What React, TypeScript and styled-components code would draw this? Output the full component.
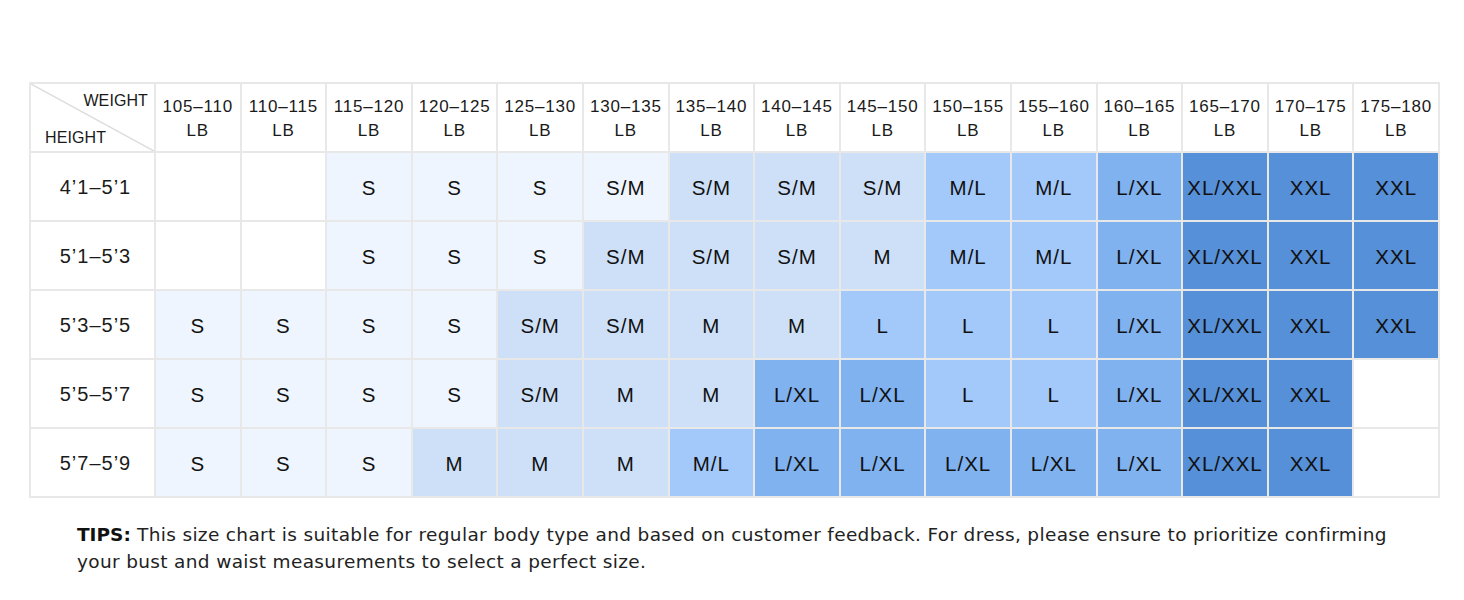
import React from "react";
import styled, { createGlobalStyle } from "styled-components";

type Tone = 0 | 1 | 2 | 3 | 4 | 5;

const tones: Record<Tone, string> = {
  0: "#ffffff",
  1: "#eef5fe",
  2: "#cde0f8",
  3: "#a3c9fa",
  4: "#80b2f0",
  5: "#5690d8",
};

const weights = [
  "105–110",
  "110–115",
  "115–120",
  "120–125",
  "125–130",
  "130–135",
  "135–140",
  "140–145",
  "145–150",
  "150–155",
  "155–160",
  "160–165",
  "165–170",
  "170–175",
  "175–180",
];

// each cell: [size, tone]
const rows: { height: string; cells: [string, Tone][] }[] = [
  {
    height: "4’1–5’1",
    cells: [
      ["", 0], ["", 0], ["S", 1], ["S", 1], ["S", 1], ["S/M", 1], ["S/M", 2], ["S/M", 2],
      ["S/M", 2], ["M/L", 3], ["M/L", 3], ["L/XL", 4], ["XL/XXL", 5], ["XXL", 5], ["XXL", 5],
    ],
  },
  {
    height: "5’1–5’3",
    cells: [
      ["", 0], ["", 0], ["S", 1], ["S", 1], ["S", 1], ["S/M", 2], ["S/M", 2], ["S/M", 2],
      ["M", 2], ["M/L", 3], ["M/L", 3], ["L/XL", 4], ["XL/XXL", 5], ["XXL", 5], ["XXL", 5],
    ],
  },
  {
    height: "5’3–5’5",
    cells: [
      ["S", 1], ["S", 1], ["S", 1], ["S", 1], ["S/M", 2], ["S/M", 2], ["M", 2], ["M", 2],
      ["L", 3], ["L", 3], ["L", 3], ["L/XL", 4], ["XL/XXL", 5], ["XXL", 5], ["XXL", 5],
    ],
  },
  {
    height: "5’5–5’7",
    cells: [
      ["S", 1], ["S", 1], ["S", 1], ["S", 1], ["S/M", 2], ["M", 2], ["M", 2], ["L/XL", 4],
      ["L/XL", 4], ["L", 3], ["L", 3], ["L/XL", 4], ["XL/XXL", 5], ["XXL", 5], ["", 0],
    ],
  },
  {
    height: "5’7–5’9",
    cells: [
      ["S", 1], ["S", 1], ["S", 1], ["M", 2], ["M", 2], ["M", 2], ["M/L", 3], ["L/XL", 4],
      ["L/XL", 4], ["L/XL", 4], ["L/XL", 4], ["L/XL", 4], ["XL/XXL", 5], ["XXL", 5], ["", 0],
    ],
  },
];

const GlobalStyle = createGlobalStyle`
  body {
    margin: 0;
    background: #fff;
    font-family: "Liberation Sans", Arial, sans-serif;
    color: #1a1a1a;
  }
`;

const Page = styled.div`
  width: 1464px;
  height: 600px;
  box-sizing: border-box;
  padding: 82px 24px 0 29px;
`;

const Grid = styled.div`
  display: grid;
  width: 1411px;
  grid-template-columns: 123px repeat(15, 1fr);
  grid-template-rows: 67px repeat(5, 67px);
  gap: 2px;
  padding: 2px;
  box-sizing: border-box;
  background: #e8e8e8;
`;

const Corner = styled.div`
  position: relative;
  background: #fff;
  overflow: hidden;
`;

const Diagonal = styled.svg`
  position: absolute;
  inset: 0;
  width: 100%;
  height: 100%;
`;

const CornerLabel = styled.span<{ $pos: "top" | "bottom" }>`
  position: absolute;
  font-size: 16px;
  letter-spacing: 0.1px;
  ${({ $pos }) =>
    $pos === "top" ? "top: 8px; right: 6px;" : "bottom: 4px; left: 14px;"}
`;

const HeadCell = styled.div`
  background: #fff;
  display: flex;
  flex-direction: column;
  align-items: center;
  justify-content: center;
  font-size: 17px;
  line-height: 24px;
  letter-spacing: 0.8px;
  padding-top: 3px;
`;

const RowLabel = styled.div`
  background: #fff;
  display: flex;
  align-items: center;
  justify-content: center;
  font-size: 20px;
  letter-spacing: 1px;
  padding-top: 2px;
  padding-left: 6px;
`;

const SizeCell = styled.div<{ $tone: Tone }>`
  background: ${({ $tone }) => tones[$tone]};
  display: flex;
  align-items: center;
  justify-content: center;
  font-size: 20.5px;
  letter-spacing: 1px;
  padding-top: 3px;
  color: #111;
  white-space: nowrap;
`;

const Tips = styled.p`
  margin: 23px 0 0 48px;
  width: 1330px;
  font-family: "DejaVu Sans", "Liberation Sans", sans-serif;
  font-size: 18.5px;
  line-height: 27px;
  color: #222;
  letter-spacing: 0.34px;

  b {
    font-weight: 700;
    color: #111;
    letter-spacing: 0;
  }
`;

const App: React.FC = () => {
  return (
    <>
      <GlobalStyle />
      <Page>
        <Grid>
          <Corner>
            <Diagonal viewBox="0 0 123 67" preserveAspectRatio="none">
              <line x1="0" y1="0" x2="123" y2="67" stroke="#dcdcdc" strokeWidth="1.5" />
            </Diagonal>
            <CornerLabel $pos="top">WEIGHT</CornerLabel>
            <CornerLabel $pos="bottom">HEIGHT</CornerLabel>
          </Corner>
          {weights.map((w) => (
            <HeadCell key={w}>
              <span>{w}</span>
              <span>LB</span>
            </HeadCell>
          ))}
          {rows.map((row) => (
            <React.Fragment key={row.height}>
              <RowLabel>{row.height}</RowLabel>
              {row.cells.map(([size, tone], i) => (
                <SizeCell key={i} $tone={tone}>
                  {size}
                </SizeCell>
              ))}
            </React.Fragment>
          ))}
        </Grid>
        <Tips>
          <b>TIPS:</b> This size chart is suitable for regular body type and based on customer
          feedback. For dress, please ensure to prioritize confirming your bust and waist
          measurements to select a perfect size.
        </Tips>
      </Page>
    </>
  );
};

export default App;
